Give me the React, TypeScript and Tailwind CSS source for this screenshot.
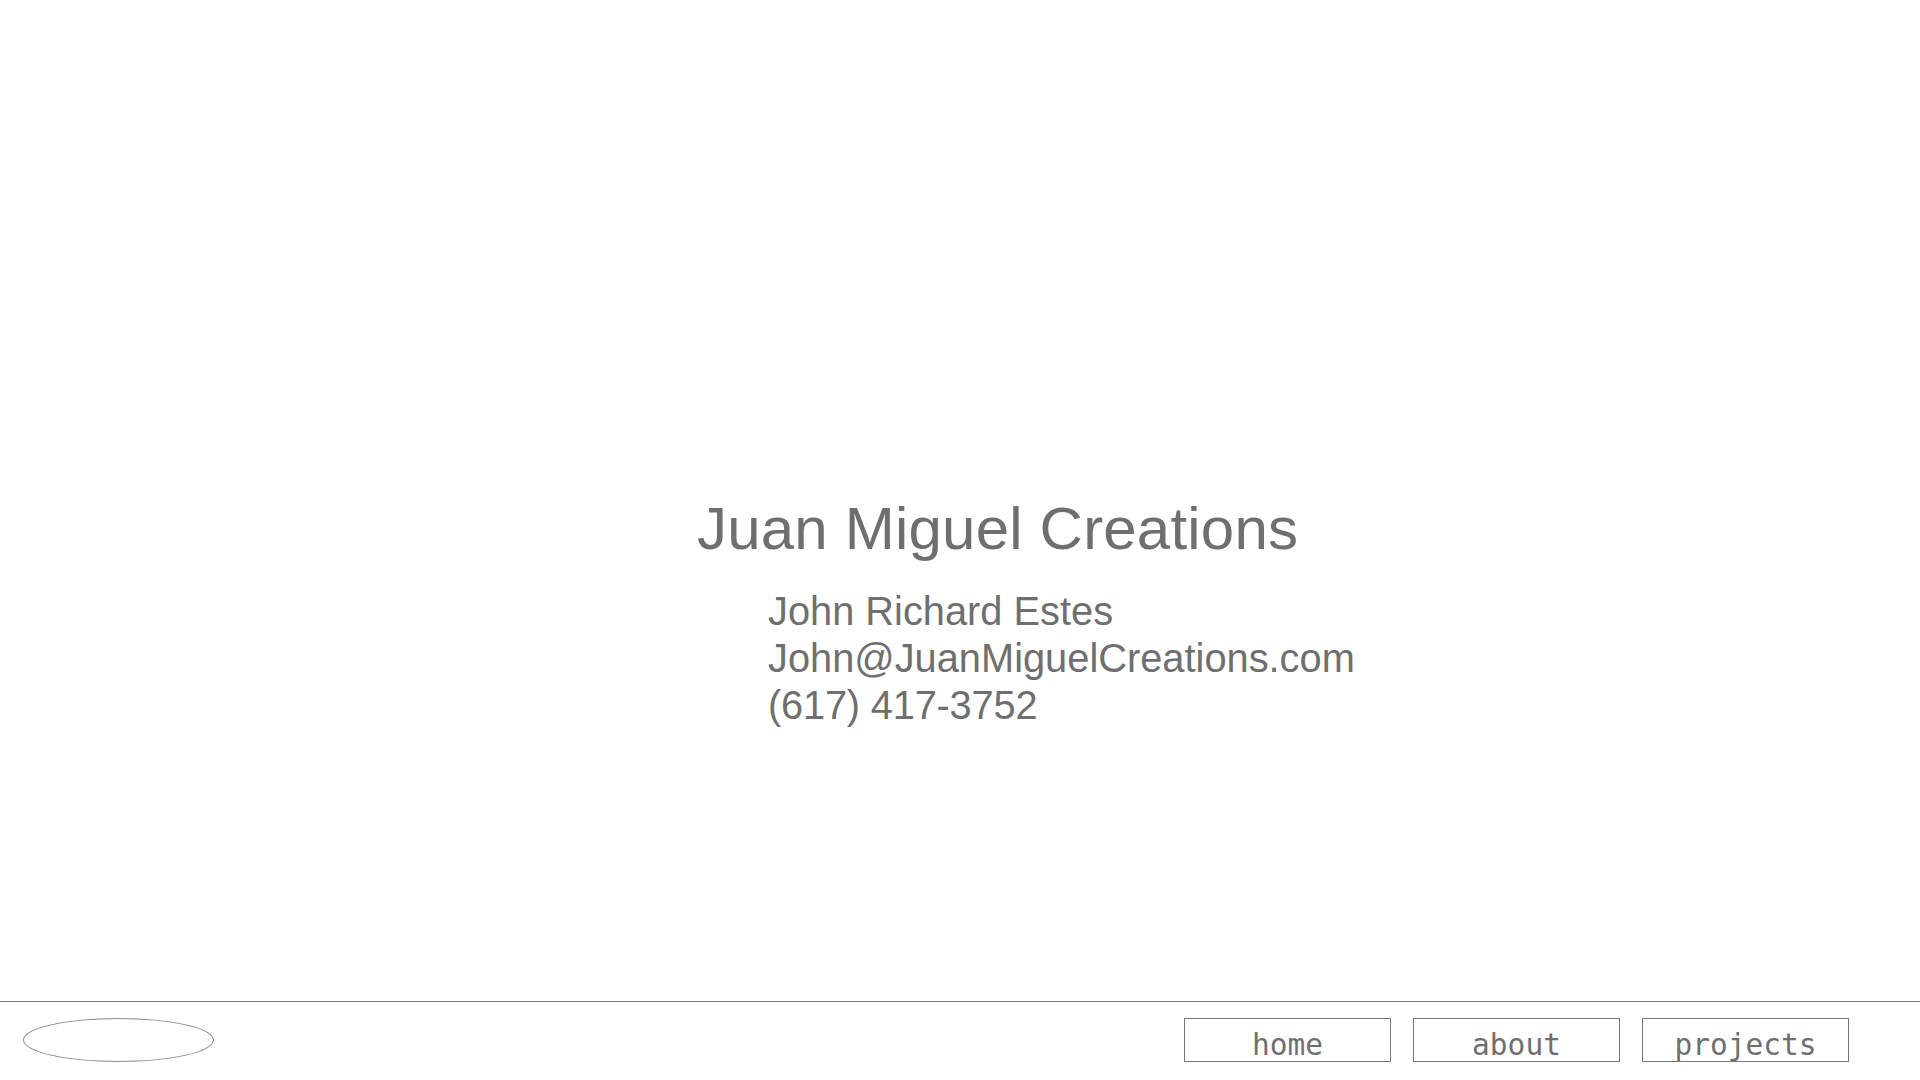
export default function App() {
  const links = ["home", "about", "projects"];

  return (
    <div className="h-[1080px] w-[1920px] bg-white text-[#6f6f6f] flex flex-col overflow-hidden">
      {/* card */}
      <div className="h-[1001px] pl-[697px] pt-[494px] font-['Liberation_Sans',Arial,sans-serif]">
        <h1 className="text-[60px] leading-[69px] tracking-[0.2px]">Juan Miguel Creations</h1>
        <div className="mt-[25px] pl-[71px] text-[39.8px] leading-[47px]">
          <p>John Richard Estes</p>
          <p>John@JuanMiguelCreations.com</p>
          <p className="tracking-[-0.2px]">(617) 417-3752</p>
        </div>
      </div>

      {/* footer */}
      <div className="flex-1 border-t border-[#777] flex items-start justify-between pt-[16px] pl-[23px] pr-[71px]">
        <div className="w-[191px] h-[44px] rounded-[50%] border border-[#8a8a8a]" />
        <nav className="flex gap-[22px]">
          {links.map((l) => (
            <a
              key={l}
              className="w-[207px] h-[44px] border border-[#777] text-center pt-[9px] leading-[34px] text-[29.5px] font-['DejaVu_Sans_Mono',monospace]"
            >
              {l}
            </a>
          ))}
        </nav>
      </div>
    </div>
  );
}
